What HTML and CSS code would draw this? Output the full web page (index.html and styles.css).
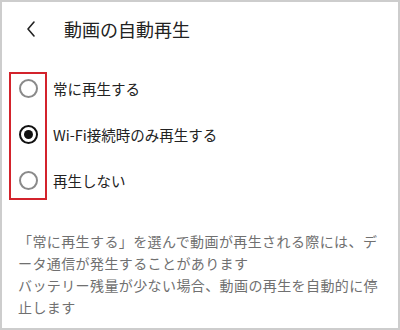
FILE: index.html
```html
<!DOCTYPE html>
<html lang="ja">
<head>
    <meta charset="UTF-8">
    <title>動画の自動再生</title>
    <link rel="stylesheet" href="styles.css">
</head>
<body>

<div class="screen">
    <div class="header">
        <svg class="back" width="12" height="18" viewBox="0 0 12 18">
            <polyline points="9,2 3,9 9,16" fill="none" stroke="#222" stroke-width="1.6" stroke-linecap="round" stroke-linejoin="round"/>
        </svg>
        <span class="title">動画の自動再生</span>
    </div>

    <div class="options">
        <div class="mark"></div>
        <div class="option">
            <span class="radio"></span>
            <span class="label">常に再生する</span>
        </div>
        <div class="option">
            <span class="radio checked"></span>
            <span class="label">Wi-Fi接続時のみ再生する</span>
        </div>
        <div class="option">
            <span class="radio"></span>
            <span class="label">再生しない</span>
        </div>
    </div>

    <p class="note">「常に再生する」を選んで動画が再生される際には、データ通信が発生することがあります<br>バッテリー残量が少ない場合、動画の再生を自動的に停止します</p>
</div>

</body>
</html>
```

FILE: styles.css
```css
body {
    margin: 0;
    background-color: white;
    font-family: "Noto Sans CJK JP", "Noto Sans", sans-serif;
}
.screen {
    width: 400px;
    height: 330px;
    box-sizing: border-box;
    border: 2px solid #cdcdcd;
    background-color: white;
    color: #222;
}
.header {
    display: flex;
    align-items: center;
    height: 54px;
    padding-left: 23px;
}
.back {
    margin-right: 27px;
}
.title {
    font-size: 18px;
}
.options {
    position: relative;
    padding-top: 9px;
}
.mark {
    position: absolute;
    left: 7px;
    top: 16px;
    width: 34px;
    height: 124px;
    border: 2px solid #d3232c;
}
.option {
    display: flex;
    align-items: center;
    height: 46px;
    padding-left: 17px;
}
.radio {
    width: 15px;
    height: 15px;
    border: 2px solid #8a8a8a;
    border-radius: 50%;
    margin-right: 15px;
    position: relative;
}
.radio.checked {
    border-color: #111;
}
.radio.checked::after {
    content: "";
    position: absolute;
    left: 3px;
    top: 3px;
    width: 9px;
    height: 9px;
    border-radius: 50%;
    background-color: #111;
}
.label {
    font-size: 14.5px;
}
.note {
    margin: 27px 0 0 0;
    padding: 0 18px 0 16px;
    font-size: 14px;
    letter-spacing: 0.4px;
    line-height: 22px;
    color: #707070;
}
```
